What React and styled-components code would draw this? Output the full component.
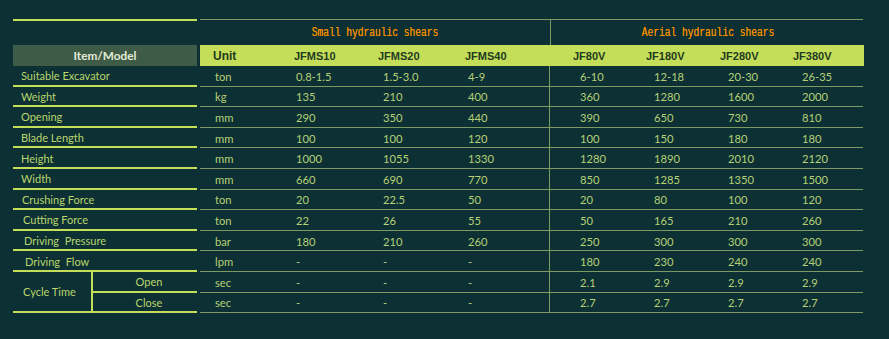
import React from "react";
import styled, { createGlobalStyle } from "styled-components";

const GlobalStyle = createGlobalStyle`
  html, body {
    margin: 0;
    padding: 0;
    background: #0c3034;
  }
  #root {
    min-height: 339px;
  }
`;

const LIME = "#c4de5a";
const THIN = "#7d9a62";
const ROW_H = 20.6;

// column widths of the right table and text offsets (header / data)
const cols = [
  { w: 86, hp: 13, dp: 15 },
  { w: 86, hp: 8, dp: 10 },
  { w: 86, hp: 6, dp: 11 },
  { w: 92, hp: 7, dp: 10 },
  { w: 88, hp: 23, dp: 30 },
  { w: 74, hp: 8, dp: 16 },
  { w: 74, hp: 8, dp: 16 },
  { w: 77, hp: 7, dp: 16 },
];

const heads = ["Unit", "JFMS10", "JFMS20", "JFMS40", "JF80V", "JF180V", "JF280V", "JF380V"];

const rows = [
  ["Suitable Excavator", "ton", "0.8-1.5", "1.5-3.0", "4-9", "6-10", "12-18", "20-30", "26-35"],
  ["Weight", "kg", "135", "210", "400", "360", "1280", "1600", "2000"],
  ["Opening", "mm", "290", "350", "440", "390", "650", "730", "810"],
  ["Blade Length", "mm", "100", "100", "120", "100", "150", "180", "180"],
  ["Height", "mm", "1000", "1055", "1330", "1280", "1890", "2010", "2120"],
  ["Width", "mm", "660", "690", "770", "850", "1285", "1350", "1500"],
  ["Crushing Force", "ton", "20", "22.5", "50", "20", "80", "100", "120"],
  ["Cutting Force", "ton", "22", "26", "55", "50", "165", "210", "260"],
  ["Driving  Pressure", "bar", "180", "210", "260", "250", "300", "300", "300"],
  ["Driving  Flow", "lpm", "-", "-", "-", "180", "230", "240", "240"],
  ["Open", "sec", "-", "-", "-", "2.1", "2.9", "2.9", "2.9"],
  ["Close", "sec", "-", "-", "-", "2.7", "2.7", "2.7", "2.7"],
];

const Page = styled.div`
  display: flex;
  gap: 3px;
  padding: 19px 0 0 13px;
`;

/* ---------- left column ---------- */
const LeftCol = styled.div`
  width: 184px;
  display: flex;
  flex-direction: column;
`;

const LeftTop = styled.div`
  height: 26px;
  box-sizing: border-box;
  border-top: 2px solid ${LIME};
`;

const ItemHead = styled.div`
  height: 21px;
  background: #3e5b47;
  color: #e4ecd8;
  font: 700 11.8px "Lato", "Open Sans", sans-serif;
  display: flex;
  align-items: center;
  justify-content: center;
`;

const Label = styled.div`
  height: ${ROW_H}px;
  box-sizing: border-box;
  border-bottom: 2px solid ${LIME};
  color: #b9d56c;
  font: 400 11px "Lato", "Open Sans", sans-serif;
  display: flex;
  align-items: center;
  white-space: pre;
  padding-left: ${(p) => p.$indent || 8}px;
  justify-content: ${(p) => (p.$center ? "center" : "flex-start")};
  padding-top: 1px;
`;

const Cycle = styled.div`
  display: flex;
`;

const CycleName = styled.div`
  width: 80px;
  box-sizing: border-box;
  border-right: 2px solid ${LIME};
  border-bottom: 2px solid ${LIME};
  color: #b9d56c;
  font: 400 11px "Lato", "Open Sans", sans-serif;
  display: flex;
  align-items: center;
  padding-left: 10px;
`;

const CycleParts = styled.div`
  flex: 1;
  display: flex;
  flex-direction: column;
`;

/* ---------- right table ---------- */
const RightCol = styled.div`
  width: 663px;
  display: flex;
  flex-direction: column;
`;

const GroupRow = styled.div`
  height: 26px;
  box-sizing: border-box;
  border-top: 1px solid ${THIN};
  display: grid;
  grid-template-columns: 350px 1fr;
`;

const GroupCell = styled.div`
  display: flex;
  align-items: center;
  justify-content: center;
  border-left: ${(p) => (p.$divided ? `1px solid ${THIN}` : "none")};
  color: #f08c00;
  font: 400 9.6px "Liberation Mono", "DejaVu Sans Mono", monospace;
  span {
    display: inline-block;
    transform: scaleY(1.25);
    text-shadow: 0 0 0.4px #f08c00;
    padding-left: ${(p) => (p.$divided ? 2 : 0)}px;
  }
`;

const Grid = styled.div`
  display: grid;
  grid-template-columns: ${cols.map((c) => c.w + "px").join(" ")};
`;

const HeadRow = styled(Grid)`
  height: 21px;
  background: ${LIME};
  margin-right: -1px;
`;

const HeadCell = styled.div`
  display: flex;
  align-items: center;
  padding-left: ${(p) => p.$pad}px;
  color: #1f3a1f;
  font: 700 ${(p) => (p.$big ? 12 : 11)}px "Liberation Sans", Arial, sans-serif;
`;

const DataRow = styled(Grid)`
  height: ${ROW_H}px;
  box-sizing: border-box;
  border-bottom: 1px solid ${THIN};
`;

const DataCell = styled.div`
  display: flex;
  align-items: center;
  padding-left: ${(p) => p.$pad}px;
  color: #b6d077;
  font: 400 11.2px "Lato", "Open Sans", sans-serif;
  border-left: ${(p) => (p.$divided ? `1px solid ${THIN}` : "none")};
  margin-left: ${(p) => (p.$divided ? -1 : 0)}px;
  padding-top: 1px;
`;

export default function App() {
  const labelRows = rows.slice(0, 10);
  const indents = [8, 8, 8, 8, 8, 8, 9, 10, 11, 12];
  return (
    <>
      <GlobalStyle />
      <Page>
        <LeftCol>
          <LeftTop />
          <ItemHead>Item/Model</ItemHead>
          {labelRows.map((r, i) => (
            <Label key={r[0]} $indent={indents[i]}>
              {r[0]}
            </Label>
          ))}
          <Cycle>
            <CycleName>Cycle Time</CycleName>
            <CycleParts>
              <Label $center $indent={0}>Open</Label>
              <Label $center $indent={0}>Close</Label>
            </CycleParts>
          </Cycle>
        </LeftCol>

        <RightCol>
          <GroupRow>
            <GroupCell>
              <span>Small hydraulic shears</span>
            </GroupCell>
            <GroupCell $divided>
              <span>Aerial hydraulic shears</span>
            </GroupCell>
          </GroupRow>
          <HeadRow>
            {heads.map((h, i) => (
              <HeadCell key={h} $pad={cols[i].hp} $big={i === 0}>
                {h}
              </HeadCell>
            ))}
          </HeadRow>
          {rows.map((r, ri) => (
            <DataRow key={ri}>
              {r.slice(1).map((v, i) => (
                <DataCell key={i} $pad={cols[i].dp} $divided={i === 4}>
                  {v}
                </DataCell>
              ))}
            </DataRow>
          ))}
        </RightCol>
      </Page>
    </>
  );
}
